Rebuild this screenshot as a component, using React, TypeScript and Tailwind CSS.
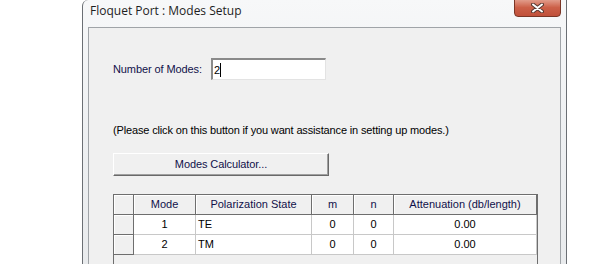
import React from "react";

const cols = [
  { label: "Mode", w: "w-[62px]" },
  { label: "Polarization State", w: "w-[116px]" },
  { label: "m", w: "w-[42px]" },
  { label: "n", w: "w-[40px]" },
  { label: "Attenuation (db/length)", w: "w-[143px]" },
];

const rows = [
  ["1", "TE", "0", "0", "0.00"],
  ["2", "TM", "0", "0", "0.00"],
];

export default function App() {
  return (
    <div className="w-[600px] h-[264px] bg-white flex overflow-hidden font-['Liberation_Sans',Arial,sans-serif] text-[11px] text-black">
      <div className="w-[82px] shrink-0" />

      {/* Window */}
      <div className="w-[485px] shrink-0 flex flex-col border-l border-r border-[#6b6f74] rounded-tl-[6px] bg-gradient-to-b from-[#f7f8f9] via-[#eef0f2] to-[#e9ebed]">
        {/* Title bar */}
        <div className="h-[27px] shrink-0 flex items-start">
          <div className="pl-[7px] pt-[3px] text-[12px] text-[#1e1e1e] font-['Open_Sans',sans-serif] leading-[16px]">
            Floquet Port : Modes Setup
          </div>
          <div className="ml-auto mr-[5px] mt-[-2px] w-[47px] h-[19px] rounded-b-[4px] border border-[#7a3626] bg-gradient-to-b from-[#e3a393] via-[#cc6048] to-[#c0503a] flex items-center justify-center shadow-[inset_0_1px_0_rgba(255,255,255,0.5)]">
            <svg width="13" height="10" viewBox="0 0 13 10">
              <path d="M2 1.5 L11 8.5 M11 1.5 L2 8.5" stroke="#5a3a32" strokeWidth="4" strokeLinecap="round" />
              <path d="M2 1.5 L11 8.5 M11 1.5 L2 8.5" stroke="#ffffff" strokeWidth="2" strokeLinecap="round" />
            </svg>
          </div>
        </div>

        {/* Client area */}
        <div className="flex-1 mx-[5px] bg-[#f0f0f0] border-t border-l border-r border-[#a0a4a8] flex flex-col pl-[24px]">
          <div className="mt-[30px] flex items-center h-[22px]">
            <span className="w-[98px] text-[#10104a] tracking-[-0.1px]">Number of Modes:</span>
            <div className="w-[115px] h-[22px] bg-white border-t-2 border-l-2 border-t-[#8a8a8a] border-l-[#8a8a8a] border-b border-r border-b-[#e3e3e3] border-r-[#e3e3e3] flex items-center pl-[1px]">
              <span className="leading-[14px]">2</span>
              <span className="w-[1px] h-[14px] bg-black" />
            </div>
          </div>

          <div className="mt-[44px] leading-[13px] tracking-[-0.15px]">
            (Please click on this button if you want assistance in setting up modes.)
          </div>

          <button className="mt-[16px] w-[216px] h-[23px] bg-[#f0f0f0] border border-t-white border-l-white border-b-[#696969] border-r-[#696969] shadow-[inset_-1px_-1px_0_#a0a0a0] flex items-center justify-center text-[#10104a] tracking-[-0.1px]">
            Modes Calculator...
          </button>

          {/* Grid */}
          <div className="mt-[18px] w-[425px] flex-1 border-t border-l border-r border-[#6e6e6e] bg-[#f0f0f0] flex flex-col">
            <div className="flex h-[20px]">
              <div className="w-[20px] h-[20px] border-r border-b border-[#6e6e6e] shadow-[inset_1px_1px_0_#ffffff]" />
              {cols.map((c) => (
                <div
                  key={c.label}
                  className={`${c.w} h-[20px] border-r border-b border-[#6e6e6e] shadow-[inset_1px_1px_0_#ffffff] flex items-center justify-center text-[#10104a]`}
                >
                  {c.label}
                </div>
              ))}
            </div>
            {rows.map((r) => (
              <div key={r[0]} className="flex h-[20px]">
                <div className="w-[20px] h-[20px] border-r border-b border-[#6e6e6e] shadow-[inset_1px_1px_0_#ffffff]" />
                {r.map((v, i) => (
                  <div
                    key={i}
                    className={`${cols[i].w} h-[20px] bg-white border-r border-b border-[#c8c8c8] flex items-center ${
                      i === 1 ? "justify-start pl-[2px]" : "justify-center"
                    }`}
                  >
                    {v}
                  </div>
                ))}
              </div>
            ))}
          </div>
        </div>
      </div>
    </div>
  );
}
